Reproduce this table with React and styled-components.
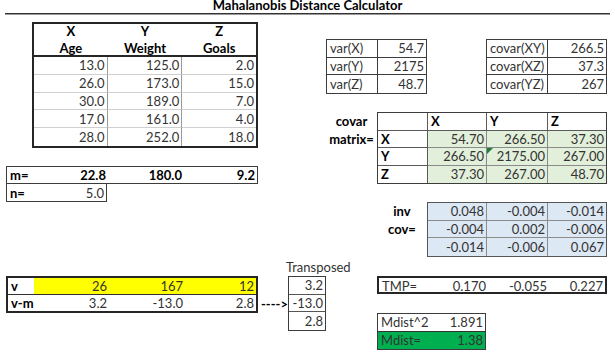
import React from "react";
import styled, { createGlobalStyle } from "styled-components";

const GlobalStyle = createGlobalStyle`
  html, body { margin: 0; padding: 0; background: #fff; }
  body {
    font-family: Lato, "Open Sans", sans-serif;
    font-size: 13px;
    color: #333;
  }
  * { box-sizing: border-box; }
`;

// spreadsheet grid: columns and rows taken from the cell edges of the sheet
const Sheet = styled.div`
  display: grid;
  width: 615px;
  height: 352px;
  overflow: hidden;
  grid-template-columns: 6px 26px 75px 76px 75px 30px 38px 51px 50px 59px 61px 60px 8px;
  grid-template-rows: 14px 8px 17px 18px 18px 19px 18px 18px 18px 18px 18px 18px 18px 18px 19px 19px 18px 19px 18px 19px 2px;
`;

const Title = styled.div`
  grid-column: 1 / 14;
  grid-row: 1 / 2;
  margin: 0 5px;
  height: 14px;
  line-height: 10px;
  text-align: center;
  font-weight: 700;
  color: #000;
  border-bottom: 1px solid #333;
  box-shadow: 0 1px 0 #9a9a9a;
`;

const Block = styled.div`
  grid-column: ${(p) => p.$col};
  grid-row: ${(p) => p.$row};
  display: grid;
  grid-template-columns: ${(p) => p.$cols};
  grid-template-rows: ${(p) => p.$rows || "none"};
  grid-auto-rows: 1fr;
  border: ${(p) => p.$border || "1px solid #3c3c3c"};
  border-top: ${(p) => (p.$noTop ? "none" : undefined)};
  background: #fff;
`;

const Cell = styled.div`
  position: relative;
  display: flex;
  align-items: center;
  justify-content: ${(p) =>
    p.$align === "right" ? "flex-end" : p.$align === "center" ? "center" : "flex-start"};
  padding: 0 2px 0 3px;
  min-width: 0;
  white-space: nowrap;
  font-weight: ${(p) => (p.$bold ? 700 : 400)};
  color: ${(p) => (p.$bold ? "#000" : "#333")};
  background: ${(p) => p.$bg || "transparent"};
  border-right: ${(p) => p.$r || "none"};
  border-bottom: ${(p) => p.$b || "none"};
`;

const HeadCell = styled.div`
  display: flex;
  flex-direction: column;
  align-items: center;
  justify-content: center;
  line-height: 17px;
  font-weight: 700;
  color: #000;
  border-bottom: 2px solid #262626;
`;

const Label = styled.div`
  grid-column: ${(p) => p.$col};
  grid-row: ${(p) => p.$row};
  display: flex;
  flex-direction: column;
  align-items: ${(p) => (p.$left ? "flex-start" : "center")};
  justify-content: space-around;
  margin-left: ${(p) => p.$shift || "0"};
  font-weight: ${(p) => (p.$bold ? 700 : 400)};
  color: ${(p) => (p.$bold ? "#000" : "#333")};
  white-space: nowrap;
`;

const ErrorMark = styled.span`
  position: absolute;
  left: 0;
  top: 0;
  width: 0;
  height: 0;
  border-top: 6px solid #1c7c3a;
  border-right: 6px solid transparent;
`;

const GREEN = "#e2efda";
const BLUE = "#dde8f5";
const YELLOW = "#ffff00";
const MDIST = "#00b050";

const data = [
  ["13.0", "125.0", "2.0"],
  ["26.0", "173.0", "15.0"],
  ["30.0", "189.0", "7.0"],
  ["17.0", "161.0", "4.0"],
  ["28.0", "252.0", "18.0"],
];

const covar = [
  ["X", "54.70", "266.50", "37.30"],
  ["Y", "266.50", "2175.00", "267.00"],
  ["Z", "37.30", "267.00", "48.70"],
];

const inv = [
  ["0.048", "-0.004", "-0.014"],
  ["-0.004", "0.002", "-0.006"],
  ["-0.014", "-0.006", "0.067"],
];

const line = (c) => `1px solid ${c}`;

const PairTable = ({ col, cols, rows }) => (
  <Block $col={col} $row="4 / 7" $cols={cols}>
    {rows.map(([k, v], i) => (
      <React.Fragment key={k}>
        <Cell $r={line("#3c3c3c")} $b={i < rows.length - 1 ? line("#3c3c3c") : "none"}>
          {k}
        </Cell>
        <Cell $align="right" $b={i < rows.length - 1 ? line("#3c3c3c") : "none"}>
          {v}
        </Cell>
      </React.Fragment>
    ))}
  </Block>
);

export default function App() {
  return (
    <>
      <GlobalStyle />
      <Sheet>
        <Title>Mahalanobis Distance Calculator</Title>

        <Block $col="3 / 6" $row="3 / 10" $cols="75fr 76fr 75fr" $rows="33px repeat(5, 1fr)" $border="2px solid #262626">
          <HeadCell><span>X</span><span>Age</span></HeadCell>
          <HeadCell><span>Y</span><span>Weight</span></HeadCell>
          <HeadCell><span>Z</span><span>Goals</span></HeadCell>
          {data.map((row, i) =>
            row.map((v, j) => (
              <Cell
                key={`${i}-${j}`}
                $align="right"
                $r={j < 2 ? line("#9a9a9a") : "none"}
                $b={i < data.length - 1 ? line("#cfcfcf") : "none"}
              >
                {v}
              </Cell>
            ))
          )}
        </Block>

        <PairTable
          col="8 / 10"
          cols="51px 1fr"
          rows={[["var(X)", "54.7"], ["var(Y)", "2175"], ["var(Z)", "48.7"]]}
        />
        <PairTable
          col="11 / 13"
          cols="61px 1fr"
          rows={[["covar(XY)", "266.5"], ["covar(XZ)", "37.3"], ["covar(YZ)", "267"]]}
        />

        <Label $col="8 / 9" $row="8 / 10" $bold>
          <span>covar</span>
          <span>matrix=</span>
        </Label>
        <Block $col="9 / 13" $row="8 / 12" $cols="50px 59px 61px 1fr">
          {["", "X", "Y", "Z"].map((h, j) => (
            <Cell key={j} $bold $r={j < 3 ? line("#5a5a5a") : "none"} $b={line("#5a5a5a")}>
              {h}
            </Cell>
          ))}
          {covar.map((row, i) =>
            row.map((v, j) => (
              <Cell
                key={`${i}-${j}`}
                $bold={j === 0}
                $align={j === 0 ? "left" : "right"}
                $bg={j === 0 ? undefined : GREEN}
                $r={j < 3 ? line(j === 0 ? "#5a5a5a" : "#8a8a8a") : "none"}
                $b={i < 2 ? line(j === 0 ? "#5a5a5a" : "#8a8a8a") : "none"}
              >
                {i === 1 && j === 2 && <ErrorMark />}
                {v}
              </Cell>
            ))
          )}
        </Block>

        <Block $col="2 / 6" $row="11 / 12" $cols="26px 75px 76px 1fr">
          <Cell $bold>m=</Cell>
          <Cell $bold $align="right">22.8</Cell>
          <Cell $bold $align="right">180.0</Cell>
          <Cell $bold $align="right">9.2</Cell>
        </Block>
        <Block $col="2 / 4" $row="12 / 13" $cols="26px 1fr" $noTop>
          <Cell $bold>n=</Cell>
          <Cell $align="right">5.0</Cell>
        </Block>

        <Label $col="9 / 10" $row="13 / 15" $bold>
          <span>inv</span>
          <span>cov=</span>
        </Label>
        <Block $col="10 / 13" $row="13 / 16" $cols="59px 61px 1fr" $border="1px solid #555">
          {inv.map((row, i) =>
            row.map((v, j) => (
              <Cell
                key={`${i}-${j}`}
                $align="right"
                $bg={BLUE}
                $r={j < 2 ? line("#8c8c8c") : "none"}
                $b={i < 2 ? line("#8c8c8c") : "none"}
              >
                {v}
              </Cell>
            ))
          )}
        </Block>

        <Label $col="7 / 10" $row="16 / 17" $left $shift="-2px">
          <span>Transposed</span>
        </Label>

        <Block $col="2 / 6" $row="17 / 19" $cols="26px 75px 76px 1fr" $border="2px solid #262626">
          <Cell $bold $b={line("#333")}>v</Cell>
          <Cell $align="right" $bg={YELLOW} $b={line("#333")}>26</Cell>
          <Cell $align="right" $bg={YELLOW} $b={line("#333")}>167</Cell>
          <Cell $align="right" $bg={YELLOW} $b={line("#333")}>12</Cell>
          <Cell $bold>v-m</Cell>
          <Cell $align="right">3.2</Cell>
          <Cell $align="right">-13.0</Cell>
          <Cell $align="right">2.8</Cell>
        </Block>

        <Label $col="6 / 7" $row="18 / 19" $left $bold $shift="3px">
          <span>----&gt;</span>
        </Label>

        <Block $col="7 / 8" $row="17 / 20" $cols="1fr">
          <Cell $align="right" $b={line("#555")}>3.2</Cell>
          <Cell $align="right" $b={line("#555")}>-13.0</Cell>
          <Cell $align="right">2.8</Cell>
        </Block>

        <Block $col="9 / 13" $row="17 / 18" $cols="50px 59px 61px 1fr" $border="2px solid #262626">
          <Cell>TMP=</Cell>
          <Cell $align="right">0.170</Cell>
          <Cell $align="right">-0.055</Cell>
          <Cell $align="right">0.227</Cell>
        </Block>

        <Block $col="9 / 11" $row="19 / 21" $cols="50px 1fr">
          <Cell $b={line("#333")}>Mdist^2</Cell>
          <Cell $align="right" $b={line("#333")}>1.891</Cell>
          <Cell $bg={MDIST}>Mdist=</Cell>
          <Cell $align="right" $bg={MDIST}>1.38</Cell>
        </Block>
      </Sheet>
    </>
  );
}
